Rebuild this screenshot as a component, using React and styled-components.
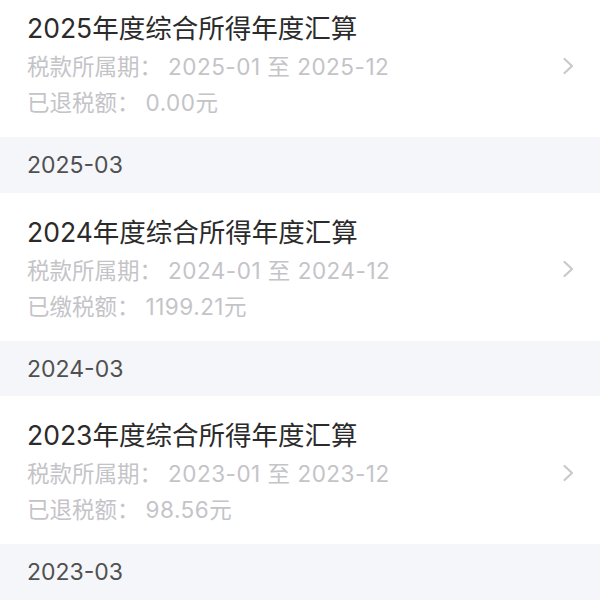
import React from "react";
import styled, { createGlobalStyle } from "styled-components";

const Global = createGlobalStyle`
  html, body { margin: 0; padding: 0; background: #ffffff; }
  body { font-family: Inter, "Noto Sans CJK SC", sans-serif; -webkit-font-smoothing: antialiased; }
`;

const Page = styled.div`
  width: 600px;
  height: 600px;
  overflow: hidden;
  background: #f5f6fa;
  display: flex;
  flex-direction: column;
`;

const Card = styled.div`
  background: #ffffff;
  display: flex;
  align-items: center;
  padding: ${(p) => (p.$cropped ? "10px" : "21px")} 25px 16px 27px;
`;

const Info = styled.div`
  flex: 1;
  display: flex;
  flex-direction: column;
`;

const Title = styled.div`
  font-size: 26.5px;
  line-height: 36px;
  color: #2b2b2b;
  margin-bottom: 3px;
  white-space: nowrap;
`;

const Line = styled.div`
  font-size: 22.5px;
  line-height: 36px;
  color: #c4c4c8;
  white-space: nowrap;
`;

const Label = styled.span`
  margin-right: 6px;
`;

const Value = styled.span`
  letter-spacing: 0.5px;
`;

const Band = styled.div`
  height: 58px;
  display: flex;
  align-items: center;
  padding: 0 27px;
  font-size: 23px;
  color: #505050;
  background: #f5f6fa;
`;

const Chevron = () => (
  <svg width="13" height="18" viewBox="0 0 13 18" fill="none">
    <path d="M2.5 2 L10 9 L2.5 16" stroke="#c9c9cc" strokeWidth="2.2" strokeLinecap="round" strokeLinejoin="round" />
  </svg>
);

const items = [
  { year: 2025, label: "已退税额", amount: "0.00", band: "2025-03" },
  { year: 2024, label: "已缴税额", amount: "1199.21", band: "2024-03" },
  { year: 2023, label: "已退税额", amount: "98.56", band: "2023-03" },
];

export default function App() {
  return (
    <>
      <Global />
      <Page>
        {items.map((it, i) => (
          <React.Fragment key={it.year}>
            <Card $cropped={i === 0}>
              <Info>
                <Title>{it.year}年度综合所得年度汇算</Title>
                <Line>
                  <Label>税款所属期：</Label>
                  <Value>{it.year}-01 至 {it.year}-12</Value>
                </Line>
                <Line>
                  <Label>{it.label}：</Label>
                  <Value>{it.amount}元</Value>
                </Line>
              </Info>
              <Chevron />
            </Card>
            <Band>{it.band}</Band>
          </React.Fragment>
        ))}
      </Page>
    </>
  );
}
